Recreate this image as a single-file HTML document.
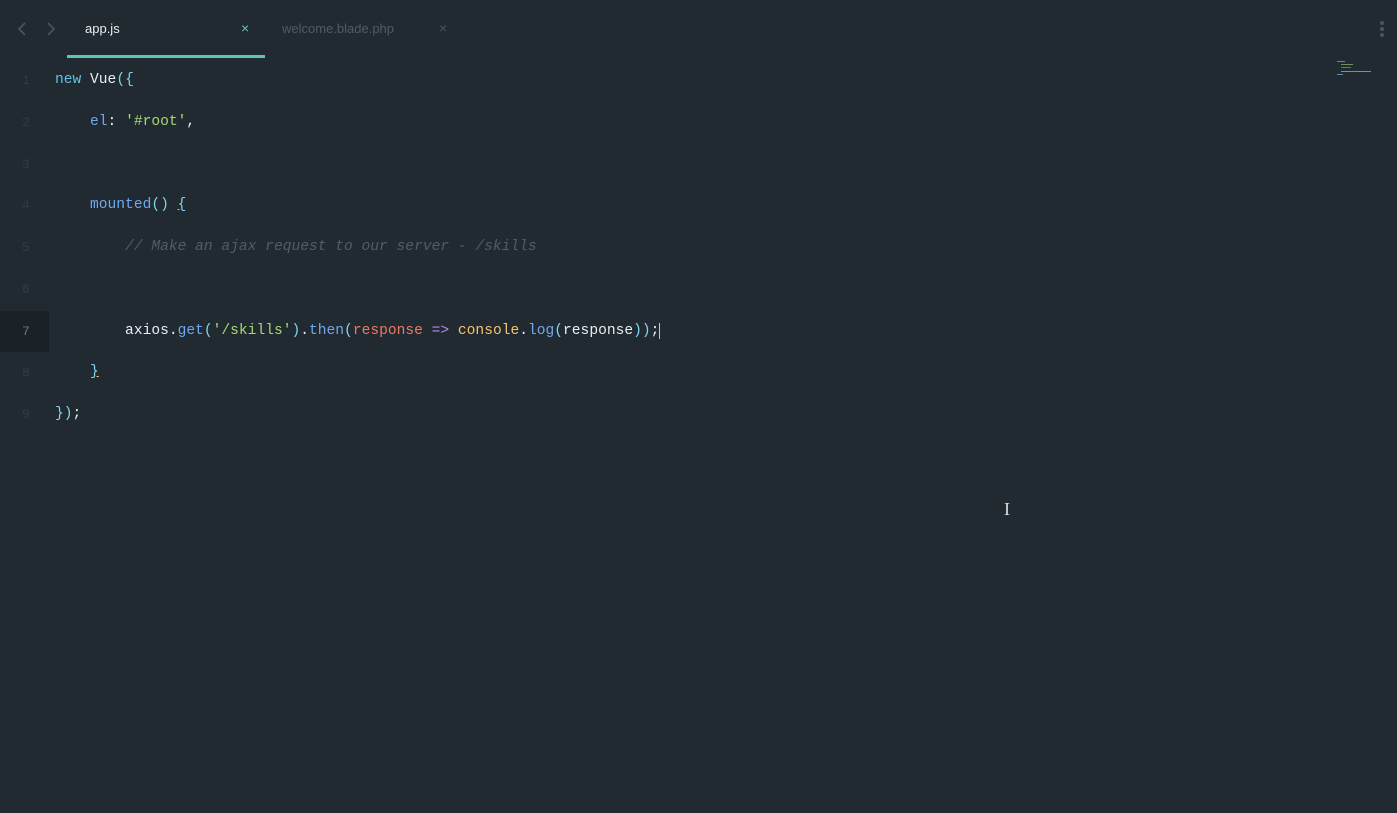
<!DOCTYPE html>
<html><head><style>
body{margin:0;width:1397px;height:813px;background:#222a31;overflow:hidden;font-family:"Liberation Sans",sans-serif;position:relative}
.tab{position:absolute;top:21px;font-size:13px}
.code{position:absolute;left:0;top:60px;width:1397px;font-family:"Liberation Mono",monospace;font-size:14.6px}
.ln{height:41.75px;line-height:41.75px;position:relative;white-space:pre}
.n{position:absolute;left:0;width:49px;padding-left:22px;box-sizing:border-box;color:#323c45;font-size:13px}
.t{position:absolute;left:55px;color:#e6edf3}
.cur .n{background:#1a2127;color:#6b7680}
.k{color:#5fc3e4}.p{color:#7fd3ee}.s{color:#a5d86f}.f{color:#6fa8f0}.r{color:#f07862}.y{color:#f5c26b}.o{color:#b28cf0}.c{color:#4f5d69;font-style:italic}
</style></head><body>
<svg style="position:absolute;left:15px;top:21px" width="45" height="16"><path d="M10 2 L4 8 L10 14" stroke="#4a555f" stroke-width="1.6" fill="none"/><path d="M33 2 L39 8 L33 14" stroke="#4a555f" stroke-width="1.6" fill="none"/></svg>
<div class="tab" style="left:85px;color:#e8eef2">app.js</div>
<div class="tab" style="left:241px;color:#5fc3c0;font-size:14px;top:20px">×</div>
<div class="tab" style="left:282px;color:#4f5b66">welcome.blade.php</div>
<div class="tab" style="left:439px;color:#4a555f;font-size:14px;top:20px">×</div>
<div style="position:absolute;left:67px;top:55px;width:198px;height:3px;background:#5fc3b8"></div>
<div style="position:absolute;left:1380px;top:21px;width:4px;height:4px;border-radius:2px;background:#4a555f;box-shadow:0 6px 0 #4a555f,0 12px 0 #4a555f"></div>
<div style="position:absolute;left:1337px;top:60px;width:34px;height:16px;opacity:.6"><div style="height:1px;width:8px;background:#7fd3ee;margin-top:1px"></div><div style="height:1px;width:12px;background:#a5d86f;margin:2px 0 0 4px"></div><div style="height:1px;width:10px;background:#6fa8f0;margin:2px 0 0 4px"></div><div style="height:1px;width:30px;background:#ccc;margin:3px 0 0 4px"></div><div style="height:1px;width:6px;background:#7fd3ee;margin-top:2px"></div></div>
<div class="code">
<div class="ln"><span class="n">1</span><span class="t"><span class="k">new</span> Vue<span class="p">({</span></span></div>
<div class="ln"><span class="n">2</span><span class="t">    <span class="f">el</span>: <span class="s">'#root'</span>,</span></div>
<div class="ln"><span class="n">3</span></div>
<div class="ln"><span class="n">4</span><span class="t">    <span class="f">mounted</span><span class="p">()</span> <span class="p" style="text-decoration:underline;text-decoration-color:#f5c26b">{</span></span></div>
<div class="ln"><span class="n">5</span><span class="t">        <span class="c">// Make an ajax request to our server - /skills</span></span></div>
<div class="ln"><span class="n">6</span></div>
<div class="ln cur"><span class="n">7</span><span class="t">        axios.<span class="f">get</span><span class="p">(</span><span class="s">'/skills'</span><span class="p">)</span>.<span class="f">then</span><span class="p">(</span><span class="r">response</span> <span class="o">=&gt;</span> <span class="y">console</span>.<span class="f">log</span><span class="p">(</span>response<span class="p">))</span>;<span style="border-left:1px solid #f5c26b"></span></span></div>
<div class="ln"><span class="n">8</span><span class="t">    <span class="p" style="text-decoration:underline;text-decoration-color:#f5c26b">}</span></span></div>
<div class="ln"><span class="n">9</span><span class="t"><span class="p">})</span>;</span></div>
</div>
<div style="position:absolute;left:1004px;top:499px;color:#ddd;font-family:'Liberation Serif',serif;font-size:18px">I</div>
</body></html>
